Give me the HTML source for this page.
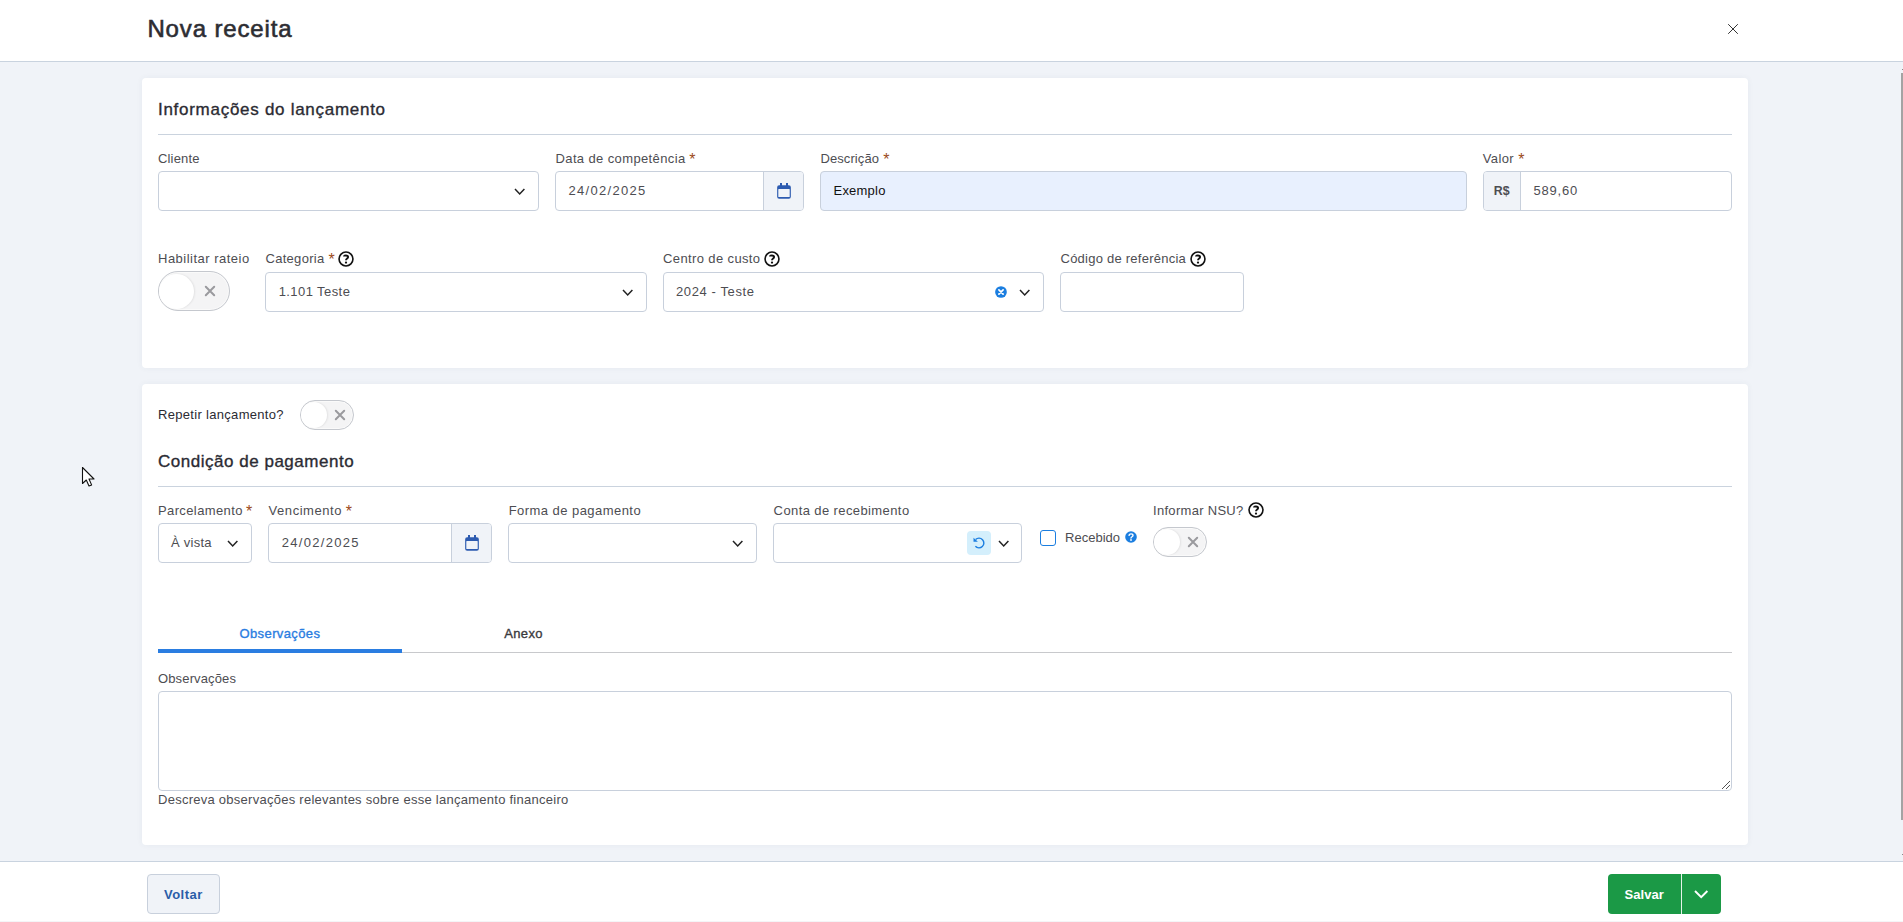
<!DOCTYPE html>
<html><head><meta charset="utf-8"><title>Nova receita</title>
<style>
*{box-sizing:border-box;margin:0;padding:0}
html,body{width:1903px;height:922px;overflow:hidden;background:#f0f3f8;font-family:"Liberation Sans",sans-serif}
.abs{position:absolute}
.t{position:absolute;white-space:nowrap;font-size:13px;line-height:20px;height:20px;color:#4d4d52}
.bx{position:absolute;border:1px solid #c8d0dc;border-radius:4px}
</style></head><body>

<div class="abs" style="left:0;top:0;width:1903px;height:62px;background:#fff;border-bottom:1px solid #c9d3df"></div>
<div class="t" style="left:147.4px;top:12.5px;height:32px;line-height:32px;font-size:24px;font-weight:400;color:#2d2d33;letter-spacing:0.86px;-webkit-text-stroke:0.6px #2d2d33;">Nova receita</div>
<svg class="abs" style="left:1726px;top:22px" width="14" height="14" viewBox="-7 -7 14 14"><path d="M-4.8,-4.8 L4.8,4.8 M4.8,-4.8 L-4.8,4.8" stroke="#333" stroke-width="1" stroke-linecap="butt"/></svg>
<div class="abs" style="left:142px;top:78px;width:1606px;height:290px;background:#fff;border-radius:4px;box-shadow:0 0 6px rgba(60,72,90,0.055)"></div>
<div class="t" style="left:158px;top:98.2px;height:24px;line-height:24px;font-size:17px;font-weight:400;color:#2b2b33;letter-spacing:0.72px;-webkit-text-stroke:0.35px #2b2b33;">Informações do lançamento</div>
<div class="abs" style="left:158px;top:134px;width:1574px;height:1px;background:#cad3de"></div>
<div class="t" style="left:158px;top:148.5px;height:20px;line-height:20px;font-size:13px;font-weight:400;color:#4d4d52;letter-spacing:0.17px;">Cliente</div>
<div class="bx" style="left:158px;top:171px;width:381px;height:40px;background:#fff;"></div>
<svg class="abs" style="left:513.0999999999999px;top:186.8px" width="13.4" height="9" viewBox="-2 -2 13.4 9"><polyline points="0,0 4.7,5 9.4,0" fill="none" stroke="#222" stroke-width="1.5" stroke-linecap="butt" stroke-linejoin="miter"/></svg>
<div class="t" style="left:555.5px;top:148.5px;height:20px;line-height:20px;font-size:13px;font-weight:400;color:#4d4d52;letter-spacing:0.38px;">Data de competência</div>
<div class="t" style="left:689.2px;top:149.9px;color:#9c4a1a;font-size:16px">*</div>
<div class="bx" style="left:555px;top:171px;width:249px;height:40px;background:#fff;"></div>
<div class="abs" style="left:763px;top:172px;width:40px;height:38px;background:#f0f3f8;border-left:1px solid #c8d0dc;border-radius:0 3px 3px 0"></div>
<div class="t" style="left:568.5px;top:180.5px;height:20px;line-height:20px;font-size:13px;font-weight:400;color:#4d4d52;letter-spacing:1.3px;">24/02/2025</div>
<svg class="abs" style="left:775.05px;top:181px" width="18" height="20" viewBox="-9 -10 18 20"><path fill-rule="evenodd" fill="#2d5bb0" d="M-4.85,-5.8 h9.7 a2,2 0 0 1 2,2 v9.5 a2,2 0 0 1 -2,2 h-9.7 a2,2 0 0 1 -2,-2 v-9.5 a2,2 0 0 1 2,-2 z M-5.2,-1.9 h10.4 a0.5,0.5 0 0 1 0.5,0.5 v6.9 a0.5,0.5 0 0 1 -0.5,0.5 h-10.4 a0.5,0.5 0 0 1 -0.5,-0.5 v-6.9 a0.5,0.5 0 0 1 0.5,-0.5 z"/><rect x="-4.0" y="-8" width="2" height="3" fill="#2d5bb0"/><rect x="2.0" y="-8" width="2" height="3" fill="#2d5bb0"/></svg>
<div class="t" style="left:820.5px;top:148.5px;height:20px;line-height:20px;font-size:13px;font-weight:400;color:#4d4d52;letter-spacing:0.08px;">Descrição</div>
<div class="t" style="left:883.2px;top:149.9px;color:#9c4a1a;font-size:16px">*</div>
<div class="bx" style="left:820px;top:171px;width:647px;height:40px;background:#e8f0fe;"></div>
<div class="t" style="left:833.5px;top:180.5px;height:20px;line-height:20px;font-size:13px;font-weight:400;color:#111;letter-spacing:0.22px;">Exemplo</div>
<div class="t" style="left:1482.7px;top:148.5px;height:20px;line-height:20px;font-size:13px;font-weight:400;color:#4d4d52;letter-spacing:0.4px;">Valor</div>
<div class="t" style="left:1518.2px;top:149.9px;color:#9c4a1a;font-size:16px">*</div>
<div class="bx" style="left:1483px;top:171px;width:249px;height:40px;background:#fff;"></div>
<div class="abs" style="left:1484px;top:172px;width:37px;height:38px;background:#f0f3f8;border-right:1px solid #c8d0dc;border-radius:3px 0 0 3px"></div>
<div class="t" style="left:1493.7px;top:180.7px;height:20px;line-height:20px;font-size:12.4px;font-weight:700;color:#4d4d52;letter-spacing:0px;">R$</div>
<div class="t" style="left:1533.4px;top:180.5px;height:20px;line-height:20px;font-size:13px;font-weight:400;color:#4d4d52;letter-spacing:0.83px;">589,60</div>
<div class="t" style="left:158px;top:248.5px;height:20px;line-height:20px;font-size:13px;font-weight:400;color:#4d4d52;letter-spacing:0.49px;">Habilitar rateio</div>
<div class="abs" style="left:158px;top:271px;width:72px;height:40px;border-radius:20.0px;background:#f4f4f5;border:1px solid #c5c8ce;box-shadow:inset 0 0 0 1px #fafafa"></div><div class="abs" style="left:159px;top:273.5px;width:35px;height:35px;border-radius:50%;background:#fff;box-shadow:1px 0 2px rgba(0,0,0,0.08)"></div><svg class="abs" style="left:203.0px;top:284.0px" width="14" height="14" viewBox="-7.0 -7.0 14 14"><path d="M-4.2,-4.2 L4.2,4.2 M4.2,-4.2 L-4.2,4.2" stroke="#9a9a9e" stroke-width="2" stroke-linecap="round"/></svg>
<div class="t" style="left:265.5px;top:248.5px;height:20px;line-height:20px;font-size:13px;font-weight:400;color:#4d4d52;letter-spacing:0.29px;">Categoria</div>
<div class="t" style="left:328.4px;top:249.9px;color:#9c4a1a;font-size:16px">*</div>
<svg class="abs" style="left:337px;top:250px" width="18" height="18" viewBox="-9 -9 18 18"><circle cx="0" cy="0" r="6.95" fill="none" stroke="#111" stroke-width="1.6"/><path d="M-2.0,-2.4 C-2.0,-4.0 2.1,-4.0 2.1,-2.0 C2.1,-0.4 0,-0.6 0,1.3" fill="none" stroke="#111" stroke-width="1.9" stroke-linecap="butt"/><circle cx="0" cy="3.55" r="1.15" fill="#111"/></svg>
<div class="bx" style="left:265px;top:272px;width:382px;height:40px;background:#fff;"></div>
<div class="t" style="left:278.7px;top:281.5px;height:20px;line-height:20px;font-size:13px;font-weight:400;color:#4d4d52;letter-spacing:0.42px;">1.101 Teste</div>
<svg class="abs" style="left:620.8px;top:287.8px" width="13.4" height="9" viewBox="-2 -2 13.4 9"><polyline points="0,0 4.7,5 9.4,0" fill="none" stroke="#222" stroke-width="1.5" stroke-linecap="butt" stroke-linejoin="miter"/></svg>
<div class="t" style="left:663px;top:248.5px;height:20px;line-height:20px;font-size:13px;font-weight:400;color:#4d4d52;letter-spacing:0.38px;">Centro de custo</div>
<svg class="abs" style="left:763px;top:250px" width="18" height="18" viewBox="-9 -9 18 18"><circle cx="0" cy="0" r="6.95" fill="none" stroke="#111" stroke-width="1.6"/><path d="M-2.0,-2.4 C-2.0,-4.0 2.1,-4.0 2.1,-2.0 C2.1,-0.4 0,-0.6 0,1.3" fill="none" stroke="#111" stroke-width="1.9" stroke-linecap="butt"/><circle cx="0" cy="3.55" r="1.15" fill="#111"/></svg>
<div class="bx" style="left:663px;top:272px;width:381px;height:40px;background:#fff;"></div>
<div class="t" style="left:676px;top:281.5px;height:20px;line-height:20px;font-size:13px;font-weight:400;color:#4d4d52;letter-spacing:0.61px;">2024 - Teste</div>
<svg class="abs" style="left:994px;top:285px" width="14" height="14" viewBox="-7 -7 14 14"><circle r="5.85" fill="#1b7ee0"/><path d="M-2.1,-2.1 L2.1,2.1 M2.1,-2.1 L-2.1,2.1" stroke="#fff" stroke-width="1.7" stroke-linecap="round"/></svg>
<svg class="abs" style="left:1018.3px;top:287.8px" width="13.4" height="9" viewBox="-2 -2 13.4 9"><polyline points="0,0 4.7,5 9.4,0" fill="none" stroke="#222" stroke-width="1.5" stroke-linecap="butt" stroke-linejoin="miter"/></svg>
<div class="t" style="left:1060.5px;top:248.5px;height:20px;line-height:20px;font-size:13px;font-weight:400;color:#4d4d52;letter-spacing:0.24px;">Código de referência</div>
<svg class="abs" style="left:1189px;top:250px" width="18" height="18" viewBox="-9 -9 18 18"><circle cx="0" cy="0" r="6.95" fill="none" stroke="#111" stroke-width="1.6"/><path d="M-2.0,-2.4 C-2.0,-4.0 2.1,-4.0 2.1,-2.0 C2.1,-0.4 0,-0.6 0,1.3" fill="none" stroke="#111" stroke-width="1.9" stroke-linecap="butt"/><circle cx="0" cy="3.55" r="1.15" fill="#111"/></svg>
<div class="bx" style="left:1060px;top:272px;width:184px;height:40px;background:#fff;"></div>
<div class="abs" style="left:142px;top:384px;width:1606px;height:461px;background:#fff;border-radius:4px;box-shadow:0 0 6px rgba(60,72,90,0.055)"></div>
<div class="t" style="left:158px;top:404.5px;height:20px;line-height:20px;font-size:13px;font-weight:400;color:#2b2b33;letter-spacing:0.31px;">Repetir lançamento?</div>
<div class="abs" style="left:300px;top:400px;width:54px;height:30px;border-radius:15.0px;background:#f4f4f5;border:1px solid #c5c8ce;box-shadow:inset 0 0 0 1px #fafafa"></div><div class="abs" style="left:301px;top:402.0px;width:26px;height:26px;border-radius:50%;background:#fff;box-shadow:1px 0 2px rgba(0,0,0,0.08)"></div><svg class="abs" style="left:333.2px;top:408.0px" width="14" height="14" viewBox="-7.0 -7.0 14 14"><path d="M-4.2,-4.2 L4.2,4.2 M4.2,-4.2 L-4.2,4.2" stroke="#9a9a9e" stroke-width="2" stroke-linecap="round"/></svg>
<div class="t" style="left:158px;top:450.0px;height:24px;line-height:24px;font-size:17px;font-weight:400;color:#2b2b33;letter-spacing:0.52px;-webkit-text-stroke:0.35px #2b2b33;">Condição de pagamento</div>
<div class="abs" style="left:158px;top:486px;width:1574px;height:1px;background:#cad3de"></div>
<div class="t" style="left:158px;top:500.5px;height:20px;line-height:20px;font-size:13px;font-weight:400;color:#4d4d52;letter-spacing:0.38px;">Parcelamento</div>
<div class="t" style="left:246.0px;top:501.9px;color:#9c4a1a;font-size:16px">*</div>
<div class="bx" style="left:158px;top:523px;width:94px;height:40px;background:#fff;"></div>
<div class="t" style="left:170.9px;top:532.5px;height:20px;line-height:20px;font-size:13px;font-weight:400;color:#4d4d52;letter-spacing:0.28px;">À vista</div>
<svg class="abs" style="left:226.3px;top:539.0px" width="13.4" height="9" viewBox="-2 -2 13.4 9"><polyline points="0,0 4.7,5 9.4,0" fill="none" stroke="#222" stroke-width="1.5" stroke-linecap="butt" stroke-linejoin="miter"/></svg>
<div class="t" style="left:268.6px;top:500.5px;height:20px;line-height:20px;font-size:13px;font-weight:400;color:#4d4d52;letter-spacing:0.54px;">Vencimento</div>
<div class="t" style="left:345.7px;top:501.9px;color:#9c4a1a;font-size:16px">*</div>
<div class="bx" style="left:268px;top:523px;width:224px;height:40px;background:#fff;"></div>
<div class="abs" style="left:451px;top:524px;width:40px;height:38px;background:#f0f3f8;border-left:1px solid #c8d0dc;border-radius:0 3px 3px 0"></div>
<div class="t" style="left:281.8px;top:532.5px;height:20px;line-height:20px;font-size:13px;font-weight:400;color:#4d4d52;letter-spacing:1.3px;">24/02/2025</div>
<svg class="abs" style="left:463px;top:533px" width="18" height="20" viewBox="-9 -10 18 20"><path fill-rule="evenodd" fill="#2d5bb0" d="M-4.85,-5.8 h9.7 a2,2 0 0 1 2,2 v9.5 a2,2 0 0 1 -2,2 h-9.7 a2,2 0 0 1 -2,-2 v-9.5 a2,2 0 0 1 2,-2 z M-5.2,-1.9 h10.4 a0.5,0.5 0 0 1 0.5,0.5 v6.9 a0.5,0.5 0 0 1 -0.5,0.5 h-10.4 a0.5,0.5 0 0 1 -0.5,-0.5 v-6.9 a0.5,0.5 0 0 1 0.5,-0.5 z"/><rect x="-4.0" y="-8" width="2" height="3" fill="#2d5bb0"/><rect x="2.0" y="-8" width="2" height="3" fill="#2d5bb0"/></svg>
<div class="t" style="left:508.7px;top:500.5px;height:20px;line-height:20px;font-size:13px;font-weight:400;color:#4d4d52;letter-spacing:0.45px;">Forma de pagamento</div>
<div class="bx" style="left:508px;top:523px;width:249px;height:40px;background:#fff;"></div>
<svg class="abs" style="left:731.3px;top:539.0px" width="13.4" height="9" viewBox="-2 -2 13.4 9"><polyline points="0,0 4.7,5 9.4,0" fill="none" stroke="#222" stroke-width="1.5" stroke-linecap="butt" stroke-linejoin="miter"/></svg>
<div class="t" style="left:773.6px;top:500.5px;height:20px;line-height:20px;font-size:13px;font-weight:400;color:#4d4d52;letter-spacing:0.4px;">Conta de recebimento</div>
<div class="bx" style="left:773px;top:523px;width:249px;height:40px;background:#fff;"></div>
<div class="abs" style="left:967px;top:531px;width:24px;height:24px;background:#d4effc;border-radius:4px"></div>
<svg class="abs" style="left:970.55px;top:535px" width="16" height="16" viewBox="-8 -8 16 16"><path d="M-3.4,-3.5 A4.87,4.87 0 1 1 -3.6,3.3" fill="none" stroke="#1b7ee0" stroke-width="1.4" stroke-linecap="butt"/><path d="M-5.5,-5.2 L-5.5,-1.2 L-1.1,-1.35 Z" fill="#1b7ee0"/></svg>
<svg class="abs" style="left:996.5999999999999px;top:538.9px" width="13.4" height="9" viewBox="-2 -2 13.4 9"><polyline points="0,0 4.7,5 9.4,0" fill="none" stroke="#222" stroke-width="1.5" stroke-linecap="butt" stroke-linejoin="miter"/></svg>
<div class="abs" style="left:1040px;top:530px;width:16px;height:16px;background:#fff;border:1px solid #1b7ee0;border-radius:3px"></div>
<div class="t" style="left:1065px;top:527.5px;height:20px;line-height:20px;font-size:13px;font-weight:400;color:#4d4d52;letter-spacing:0.01px;">Recebido</div>
<svg class="abs" style="left:1125px;top:531px" width="12" height="12" viewBox="-6 -6 12 12"><circle r="5.8" fill="#1b7ee0"/><path d="M-1.9,-1.6 C-1.9,-3.7 2,-3.7 2,-1.5 C2,-0.2 0,-0.3 0,1.1" fill="none" stroke="#fff" stroke-width="1.4" stroke-linecap="round"/><circle cx="0" cy="3" r="0.9" fill="#fff"/></svg>
<div class="t" style="left:1153px;top:500.5px;height:20px;line-height:20px;font-size:13px;font-weight:400;color:#4d4d52;letter-spacing:0.3px;">Informar NSU?</div>
<svg class="abs" style="left:1247px;top:501px" width="18" height="18" viewBox="-9 -9 18 18"><circle cx="0" cy="0" r="6.95" fill="none" stroke="#111" stroke-width="1.6"/><path d="M-2.0,-2.4 C-2.0,-4.0 2.1,-4.0 2.1,-2.0 C2.1,-0.4 0,-0.6 0,1.3" fill="none" stroke="#111" stroke-width="1.9" stroke-linecap="butt"/><circle cx="0" cy="3.55" r="1.15" fill="#111"/></svg>
<div class="abs" style="left:1153px;top:527px;width:54px;height:30px;border-radius:15.0px;background:#f4f4f5;border:1px solid #c5c8ce;box-shadow:inset 0 0 0 1px #fafafa"></div><div class="abs" style="left:1154px;top:529.0px;width:26px;height:26px;border-radius:50%;background:#fff;box-shadow:1px 0 2px rgba(0,0,0,0.08)"></div><svg class="abs" style="left:1186.0px;top:535.0px" width="14" height="14" viewBox="-7.0 -7.0 14 14"><path d="M-4.2,-4.2 L4.2,4.2 M4.2,-4.2 L-4.2,4.2" stroke="#9a9a9e" stroke-width="2" stroke-linecap="round"/></svg>
<div class="t" style="left:239.5px;top:623.5px;height:20px;line-height:20px;font-size:13px;font-weight:400;color:#2a7de1;letter-spacing:0.39px;-webkit-text-stroke:0.35px #2a7de1;">Observações</div>
<div class="t" style="left:504.2px;top:623.5px;height:20px;line-height:20px;font-size:13px;font-weight:400;color:#3a3a3e;letter-spacing:0.38px;-webkit-text-stroke:0.35px #3a3a3e;">Anexo</div>
<div class="abs" style="left:158px;top:652px;width:1574px;height:1px;background:#c8c9cc"></div>
<div class="abs" style="left:158px;top:649px;width:244px;height:4px;background:#2a7de1"></div>
<div class="t" style="left:158px;top:668.5px;height:20px;line-height:20px;font-size:13px;font-weight:400;color:#4d4d52;letter-spacing:0.14px;">Observações</div>
<div class="bx" style="left:158px;top:691px;width:1574px;height:100px;background:#fff;"></div>
<svg class="abs" style="left:1721px;top:780px" width="10" height="10" viewBox="0 0 10 10"><path d="M9,1 L1,9 M9,5 L5,9" stroke="#555" stroke-width="1"/></svg>
<div class="t" style="left:158px;top:789.5px;height:20px;line-height:20px;font-size:13px;font-weight:400;color:#4d4d52;letter-spacing:0.26px;">Descreva observações relevantes sobre esse lançamento financeiro</div>
<div class="abs" style="left:0;top:861px;width:1903px;height:61px;background:#fff;border-top:1px solid #c9d3df"></div>
<div class="abs" style="left:147px;top:874px;width:73px;height:40px;background:#f0f3f8;border:1px solid #c8d0dc;border-radius:4px"></div>
<div class="t" style="left:164px;top:884.5px;height:20px;line-height:20px;font-size:13px;font-weight:700;color:#2a5da8;letter-spacing:0.48px;">Voltar</div>
<div class="abs" style="left:1608px;top:874px;width:113px;height:40px;background:#1b9946;border-radius:4px"></div>
<div class="abs" style="left:1681px;top:874px;width:1px;height:40px;background:#e6f3ea"></div>
<div class="t" style="left:1624.5px;top:884.5px;height:20px;line-height:20px;font-size:13px;font-weight:700;color:#fff;letter-spacing:0.07px;">Salvar</div>
<svg class="abs" style="left:1692.8px;top:889.3px" width="16.4" height="10.2" viewBox="-2 -2 16.4 10.2"><polyline points="0,0 6.2,6.2 12.4,0" fill="none" stroke="#fff" stroke-width="1.9" stroke-linecap="butt" stroke-linejoin="miter"/></svg>
<div class="abs" style="left:0;top:921px;width:1903px;height:1px;background:#f4f5f7"></div>
<div class="abs" style="left:1901px;top:73px;width:2px;height:747px;background:#a3a3a3"></div>
<div class="abs" style="left:1902px;top:69px;width:1px;height:1px;background:#8a8a8a"></div>
<div class="abs" style="left:1902px;top:854px;width:1px;height:1px;background:#8a8a8a"></div>
<svg class="abs" style="left:81px;top:466px" width="16" height="22" viewBox="0 0 16 22"><path d="M1.5,1.5 L1.5,17.5 L5.3,14 L8,20 L10.6,18.9 L8,13 L13,13 Z" fill="#fff" stroke="#111" stroke-width="1.1" stroke-linejoin="round"/></svg>
</body></html>
